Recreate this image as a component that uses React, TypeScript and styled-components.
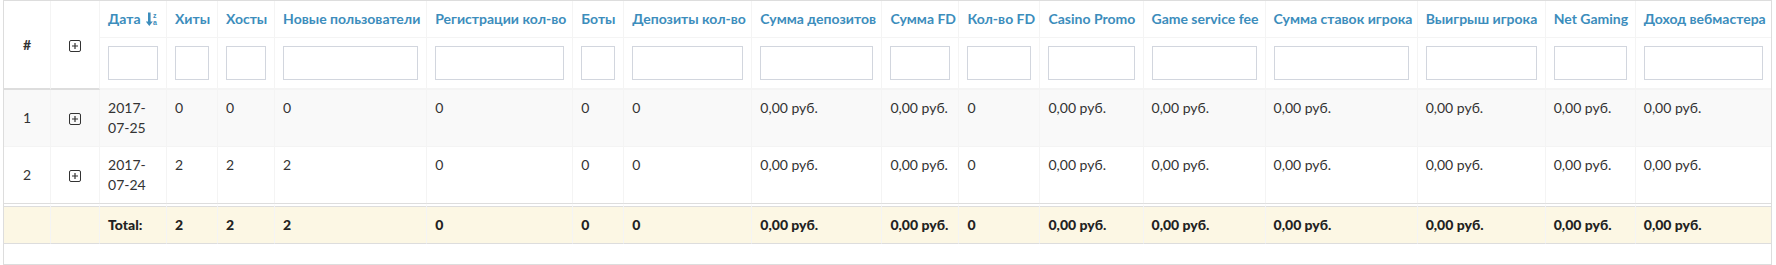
import React from "react";
import styled, { createGlobalStyle } from "styled-components";

const GlobalStyle = createGlobalStyle`
  html, body { margin: 0; padding: 0; background: #fff; }
  body {
    font-family: "Lato", "Liberation Sans", sans-serif;
    font-size: 14px;
    color: #333;
  }
  * { box-sizing: border-box; }
`;

type Col = { title: string; width: number; sort?: boolean; key: string };

const columns: Col[] = [
  { key: "date", title: "Дата", width: 67, sort: true },
  { key: "hits", title: "Хиты", width: 51 },
  { key: "hosts", title: "Хосты", width: 57 },
  { key: "newUsers", title: "Новые пользователи", width: 152 },
  { key: "regs", title: "Регистрации кол-во", width: 146 },
  { key: "bots", title: "Боты", width: 51 },
  { key: "deps", title: "Депозиты кол-во", width: 128 },
  { key: "depSum", title: "Сумма депозитов", width: 130 },
  { key: "fdSum", title: "Сумма FD", width: 77 },
  { key: "fdCount", title: "Кол-во FD", width: 81 },
  { key: "promo", title: "Casino Promo", width: 103 },
  { key: "fee", title: "Game service fee", width: 122 },
  { key: "bets", title: "Сумма ставок игрока", width: 152 },
  { key: "wins", title: "Выигрыш игрока", width: 128 },
  { key: "net", title: "Net Gaming", width: 90 },
  { key: "income", title: "Доход вебмастера", width: 135 },
];

const R = "0,00 руб.";
const rows: string[][] = [
  ["2017-07-25", "0", "0", "0", "0", "0", "0", R, R, "0", R, R, R, R, R, R],
  ["2017-07-24", "2", "2", "2", "0", "0", "0", R, R, "0", R, R, R, R, R, R],
];
const totals = ["Total:", "2", "2", "2", "0", "0", "0", R, R, "0", R, R, R, R, R, R];

const Page = styled.div`
  padding-left: 3px;
  width: 1772px;
`;

const GridBox = styled.div`
  border: 1px solid #ddd;
  width: 1769px;
`;

const Table = styled.table`
  border-collapse: separate;
  border-spacing: 0;
  table-layout: fixed;
  width: 1767px;
  margin-bottom: 20px;
`;

const Th = styled.th<{ $rowSpan2?: boolean; $last?: boolean; $filter?: boolean }>`
  padding: 8px;
  line-height: 20px;
  text-align: left;
  vertical-align: top;
  font-weight: 700;
  white-space: nowrap;
  border-right: ${(p) => (p.$last ? "0" : "1px solid #f4f4f4")};
  border-bottom: ${(p) =>
    p.$rowSpan2 ? "2px solid #ddd" : p.$filter ? "2px solid #f4f4f4" : "1px solid #f4f4f4"};
`;

const CenterTh = styled(Th)`
  text-align: center;
  vertical-align: middle;
  color: #333;
`;

const HeadLink = styled.a`
  color: #3c8dbc;
  text-decoration: none;
  display: inline-flex;
  align-items: center;
  gap: 5px;
`;

const FilterInput = styled.input`
  display: block;
  width: 100%;
  height: 34px;
  border: 1px solid #d2d6de;
  border-radius: 0;
  padding: 6px 12px;
  font: inherit;
  background: #fff;
`;

const Tr = styled.tr<{ $striped?: boolean }>`
  background: ${(p) => (p.$striped ? "#f9f9f9" : "#fff")};
`;

const Td = styled.td<{ $center?: boolean; $last?: boolean; $lastRow?: boolean }>`
  padding: 8px;
  line-height: 20px;
  vertical-align: ${(p) => (p.$center ? "middle" : "top")};
  text-align: ${(p) => (p.$center ? "center" : "left")};
  border-right: ${(p) => (p.$last ? "0" : "1px solid #f4f4f4")};
  border-bottom: ${(p) => (p.$lastRow ? "0" : "1px solid #f4f4f4")};
  word-wrap: break-word;
`;

const FootTd = styled.td<{ $last?: boolean }>`
  padding: 8px;
  line-height: 20px;
  font-weight: 900;
  white-space: nowrap;
  background: #fcf7e4;
  background-clip: padding-box;
  border-top: 4px double #ddd;
  border-bottom: 1px solid #ddd;
  border-right: ${(p) => (p.$last ? "0" : "1px solid #f4f4f4")};
  color: #222;
`;

const ExpandIcon = () => (
  <svg width="12" height="12" viewBox="0 0 12 12" style={{ display: "inline-block", verticalAlign: "middle" }}>
    <rect x="0.5" y="0.5" width="11" height="11" rx="1.5" fill="none" stroke="#333" strokeWidth="1" />
    <path d="M6 3v6M3 6h6" stroke="#333" strokeWidth="1.2" />
  </svg>
);

const SortIcon = () => (
  <svg width="12" height="16" viewBox="0 0 12 16" style={{ display: "block" }}>
    <path d="M2 1.5h2.6v9h2.2L3.3 15 -0.2 10.5H2z" fill="#3c8dbc" />
    <text x="7" y="6.5" fontSize="7" fontWeight="700" fill="#3c8dbc" fontFamily="Liberation Sans, sans-serif">z</text>
    <text x="7" y="13.5" fontSize="7" fontWeight="700" fill="#3c8dbc" fontFamily="Liberation Sans, sans-serif">a</text>
  </svg>
);

export default function App() {
  return (
    <Page>
      <GlobalStyle />
      <GridBox>
        <Table>
          <colgroup>
            <col style={{ width: 47 }} />
            <col style={{ width: 49 }} />
            {columns.map((c) => (
              <col key={c.key} style={{ width: c.width }} />
            ))}
          </colgroup>
          <thead>
            <tr>
              <CenterTh rowSpan={2} $rowSpan2>#</CenterTh>
              <CenterTh rowSpan={2} $rowSpan2>
                <ExpandIcon />
              </CenterTh>
              {columns.map((c, i) => (
                <Th key={c.key} $last={i === columns.length - 1}>
                  <HeadLink href="#">
                    {c.title}
                    {c.sort && <SortIcon />}
                  </HeadLink>
                </Th>
              ))}
            </tr>
            <tr>
              {columns.map((c, i) => (
                <Th key={c.key} $filter $last={i === columns.length - 1}>
                  <FilterInput type="text" />
                </Th>
              ))}
            </tr>
          </thead>
          <tbody>
            {rows.map((r, ri) => (
              <Tr key={ri} $striped={ri === 0}>
                <Td $center $lastRow={ri === rows.length - 1}>{ri + 1}</Td>
                <Td $center $lastRow={ri === rows.length - 1}>
                  <ExpandIcon />
                </Td>
                {r.map((v, ci) => (
                  <Td key={ci} $last={ci === r.length - 1} $lastRow={ri === rows.length - 1}>
                    {v}
                  </Td>
                ))}
              </Tr>
            ))}
          </tbody>
          <tfoot>
            <tr>
              <FootTd />
              <FootTd />
              {totals.map((v, ci) => (
                <FootTd key={ci} $last={ci === totals.length - 1}>
                  {v}
                </FootTd>
              ))}
            </tr>
          </tfoot>
        </Table>
      </GridBox>
    </Page>
  );
}
